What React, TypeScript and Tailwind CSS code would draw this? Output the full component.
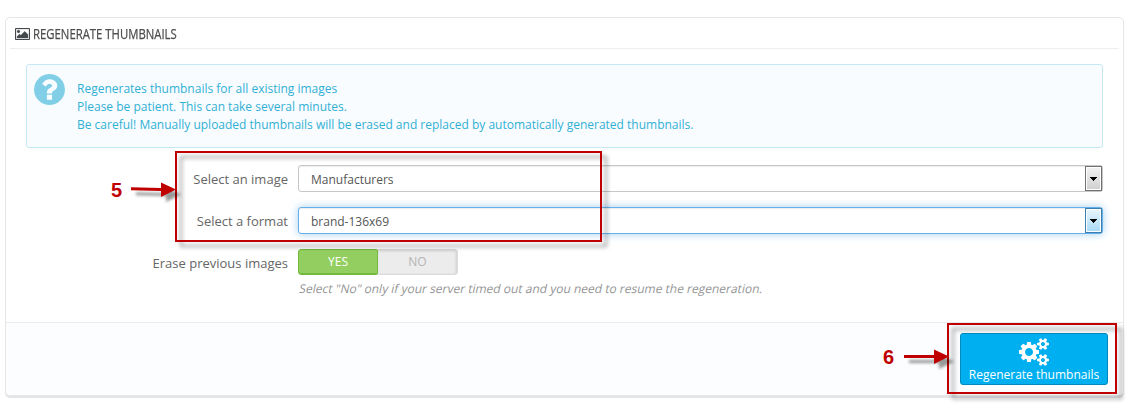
import React from "react";

const PictureIcon = () => (
  <svg viewBox="-64 128 1920 1536" className="h-3 w-[15px] shrink-0" fill="#444a4c" stroke="#444a4c" strokeWidth="30">
    <path d="M576 576q0 80-56 136t-136 56-136-56-56-136 56-136 136-56 136 56 56 136zm1024 384v448h-1408v-192l320-320 160 160 512-512zm96-704h-1600q-13 0-22.5 9.5t-9.5 22.5v1216q0 13 9.5 22.5t22.5 9.5h1600q13 0 22.5-9.5t9.5-22.5v-1216q0-13-9.5-22.5t-22.5-9.5zm160 32v1216q0 66-47 113t-113 47h-1600q-66 0-113-47t-47-113v-1216q0-66 47-113t113-47h1600q66 0 113 47t47 113z" />
  </svg>
);

const QuestionIcon = () => (
  <svg viewBox="128 128 1536 1536" className="size-[31px] shrink-0" fill="#81cfe6">
    <path d="M1024 1376v-192q0-14-9-23t-23-9h-192q-14 0-23 9t-9 23v192q0 14 9 23t23 9h192q14 0 23-9t9-23zm256-672q0-88-55.5-163t-138.5-116-170-41q-243 0-371 213-15 24 8 42l132 100q7 6 19 6 16 0 25-12 53-68 86-92 34-24 86-24 48 0 85.5 26t37.5 59q0 38-20 61t-68 45q-63 28-115.5 86.5t-52.5 125.5v36q0 14 9 23t23 9h192q14 0 23-9t9-23q0-19 21.5-49.5t54.5-49.5q32-18 49-28.5t46-35 44.5-48 28-60.5 12.5-81zm384 192q0 209-103 385.5t-279.5 279.5-385.5 103-385.5-103-279.5-279.5-103-385.5 103-385.5 279.5-279.5 385.5-103 385.5 103 279.5 279.5 103 385.5z" />
  </svg>
);

const smallCog =
  "v140q0 16-149 31-12 27-30 52 51 113 51 138 0 4-4 7-122 71-124 71-8 0-46-47t-52-68q-20 2-30 2t-30-2q-14 21-52 68t-46 47q-2 0-124-71-4-3-4-7 0-25 51-138-18-25-30-52-149-15-149-31v-140q0-16 149-31 13-29 30-52-51-113-51-138 0-4 4-7 4-2 35-20t59-34 30-16q8 0 46 46.5t52 67.5q20-2 30-2t30 2q51-71 92-112l6-2q4 0 124 70 4 3 4 7 0 25-51 138 17 23 30 52 149 15 149 31z";

const CogsIcon = () => (
  <svg viewBox="-64 0 1920 1792" className="h-7 w-[30px]" fill="#fff" fillRule="evenodd">
    <path
      d={
        "M832 896q0-106-75-181t-181-75-181 75-75 181 75 181 181 75 181-75 75-181zm768 512q0-52-38-90t-90-38-90 38-38 90q0 53 37.5 90.5t90.5 37.5 90.5-37.5 37.5-90.5zm0-1024q0-52-38-90t-90-38-90 38-38 90q0 53 37.5 90.5t90.5 37.5 90.5-37.5 37.5-90.5zm-384 421v185q0 10-7 19.5t-16 10.5l-155 24q-11 35-32 76 34 48 90 115 7 11 7 20 0 12-7 19-23 30-82.5 89.5t-78.5 59.5q-11 0-21-7l-115-90q-37 19-77 31-11 108-23 155-7 24-30 24h-186q-11 0-20-7.5t-10-17.5l-23-153q-34-10-75-31l-118 89q-7 7-20 7-11 0-21-8-144-133-144-160 0-9 7-19 10-14 41-53t47-61q-23-44-35-82l-152-24q-10-1-17-9.5t-7-19.5v-185q0-10 7-19.5t16-10.5l155-24q11-35 32-76-34-48-90-115-7-11-7-20 0-12 7-20 22-30 82-89t79-59q11 0 21 7l115 90q34-18 77-32 11-108 23-154 7-24 30-24h186q11 0 20 7.5t10 17.5l23 153q34 10 75 31l118-89q8-7 20-7 11 0 21 8 144 133 144 160 0 8-7 19-12 16-42 54t-45 60q23 48 34 82l152 23q10 2 17 10.5t7 19.5zM1856 1338" +
        smallCog +
        "M1856 314" +
        smallCog
      }
    />
  </svg>
);

const Caret = () => (
  <svg viewBox="0 0 7 4" className="h-1 w-[7px]" shapeRendering="crispEdges">
    <path d="M0 0h7v1h-1v1h-1v1h-1v1h-1v-1h-1v-1h-1v-1h-1z" fill="#000" />
  </svg>
);

function SelectField({ value, focused = false }: { value: string; focused?: boolean }) {
  return (
    <div
      className={
        focused
          ? "flex h-[27px] w-[805px] justify-between rounded-[3px] border border-[#66afe9] bg-white shadow-[inset_0_1px_1px_rgba(0,0,0,0.075),0_0_8px_rgba(102,175,233,0.6)]"
          : "flex h-[27px] w-[805px] justify-between rounded-[3px] border border-[#c7c7c7] bg-white shadow-[inset_0_1px_1px_rgba(0,0,0,0.075)]"
      }
    >
      <span className="pl-3 text-[12px] leading-[27px] text-[#555]">{value}</span>
      <span
        className={
          focused
            ? "flex h-[25px] w-[17px] items-center justify-center border border-[#3c7fb1] bg-gradient-to-b from-[#eaf6fd] to-[#a7d9f5] shadow-[inset_0_0_0_1px_#fff]"
            : "flex h-[25px] w-[17px] items-center justify-center border border-[#707070] bg-gradient-to-b from-[#f2f2f2] to-[#cfcfcf] shadow-[inset_0_0_0_1px_#fff]"
        }
      >
        <Caret />
      </span>
    </div>
  );
}

const Label = ({ children }: { children: React.ReactNode }) => (
  <span className="h-[27px] w-[282px] pt-px text-right text-[13px] leading-[27px] text-[#666]">{children}</span>
);

const Arrow = ({ tilt = 0 }: { tilt?: number }) => (
  <svg
    viewBox="0 0 48 16"
    className="h-4 w-12 overflow-visible drop-shadow-[5px_5px_1.5px_rgba(0,0,0,0.4)]"
    fill="#c00000"
  >
    <path d={`M0 ${6 - tilt}L30 6V0.5L45 7.5L30 15V9L0 ${9 - tilt}Z`} />
  </svg>
);

export default function App() {
  return (
    <div className="relative h-[415px] w-[1133px] overflow-hidden bg-white pt-[17px] pl-[5px] font-['Open_Sans',sans-serif]">
      <section className="flex h-[379px] w-[1119px] flex-col overflow-visible rounded-[5px] border border-[#e6e6e6] bg-white shadow-[0_2px_0_#e4e5e7]">
        <header className="mx-1 flex h-[31px] shrink-0 items-center gap-[3px] border-b border-[#eee] pt-px pl-[5px]">
          <PictureIcon />
          <h1 className="w-[146px] text-[14px] leading-[30px] whitespace-nowrap text-[#4c4c4c]">
            <span className="inline-block origin-left scale-x-[0.81] [-webkit-text-stroke:0.25px_#4c4c4c]">
              REGENERATE THUMBNAILS
            </span>
          </h1>
        </header>

        <div className="mt-[15px] ml-5 flex h-[84px] w-[1077px] shrink-0 gap-3 rounded-[3px] border border-[#c5e9f3] bg-[#f8fcff] pt-[9px] pl-[7px]">
          <QuestionIcon />
          <p className="pt-[6px] text-[12px] leading-[17.8px] text-[#31b0d5]">
            Regenerates thumbnails for all existing images
            <br />
            Please be patient. This can take several minutes.
            <br />
            Be careful! Manually uploaded thumbnails will be erased and replaced by automatically generated thumbnails.
          </p>
        </div>

        <div className="mt-[17px] flex grow flex-col gap-[15px]">
          <div className="flex gap-[10px]">
            <Label>Select an image</Label>
            <SelectField value="Manufacturers" />
          </div>
          <div className="flex gap-[10px]">
            <Label>Select a format</Label>
            <SelectField value="brand-136x69" focused />
          </div>
          <div className="flex gap-[10px]">
            <Label>Erase previous images</Label>
            <div>
              <div className="flex h-[26px] w-40 overflow-hidden rounded-[3px] text-center text-[12px] leading-[24px]">
                <span className="w-20 rounded-l-[3px] rounded-r-[2px] border border-b-2 border-[#72b93e] bg-[#92cf60] text-white">YES</span>
                <span className="w-20 rounded-r-[3px] border border-l-0 border-[#dadada] bg-[#ececec] text-[#b5b5b5] shadow-[inset_-1px_1px_3px_rgba(0,0,0,0.12)]">
                  NO
                </span>
              </div>
              <p className="-skew-x-12 pt-[5px] pl-[2px] text-[12px] leading-[18px] text-[#959595]">
                Select "No" only if your server timed out and you need to resume the regeneration.
              </p>
            </div>
          </div>
        </div>

        <footer className="flex h-[73px] shrink-0 justify-end rounded-b-[4px] border-t border-[#e9ecee] bg-[#fcfdfe] pt-[10px] pr-[15px]">
          <button className="flex h-[52px] w-[148px] flex-col items-center rounded-[3px] border border-[#008abd] bg-[#00aff0] pt-1 text-[12px] leading-[18px] text-white">
            <CogsIcon />
            <span>Regenerate thumbnails</span>
          </button>
        </footer>
      </section>

      <div className="absolute top-[151px] left-[175px] h-[91px] w-[427px] border-2 border-[#c00000] drop-shadow-[5px_5px_2px_rgba(0,0,0,0.4)]" />
      <div className="absolute top-[323px] left-[947px] h-[71px] w-[170px] border-2 border-[#c00000] drop-shadow-[5px_5px_2px_rgba(0,0,0,0.4)]" />
      <div className="absolute top-[178px] left-[111px] flex items-center gap-[9px] font-['Liberation_Sans',sans-serif] text-[20px] leading-6 font-bold text-[#c00000]">
        <span className="w-[11px]">5</span>
        <Arrow tilt={0.8} />
      </div>
      <div className="absolute top-[345px] left-[883px] flex items-center gap-[10px] font-['Liberation_Sans',sans-serif] text-[20px] leading-6 font-bold text-[#c00000]">
        <span className="w-[11px]">6</span>
        <Arrow />
      </div>
    </div>
  );
}
